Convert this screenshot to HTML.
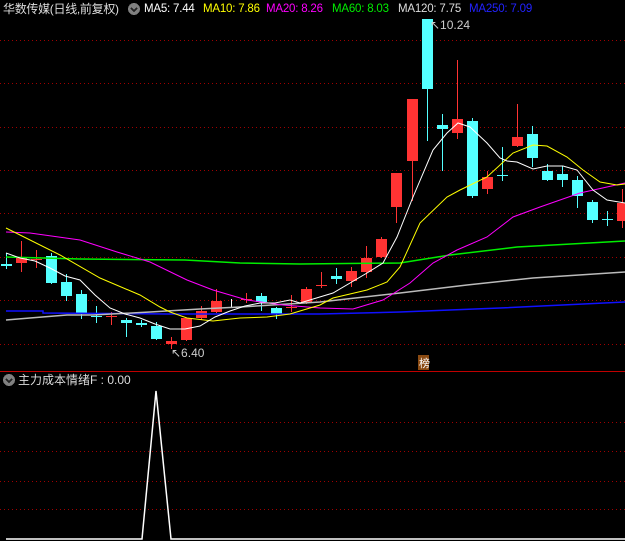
<!DOCTYPE html>
<html><head><meta charset="utf-8"><style>
body{margin:0;background:#000;width:625px;height:541px;overflow:hidden;position:relative;font-family:"Liberation Sans","Noto Sans CJK SC",sans-serif}
.t{position:absolute;top:0;font-size:11.5px;line-height:18px;white-space:nowrap;letter-spacing:-0.2px}
</style></head><body>
<svg width="625" height="541" style="position:absolute;left:0;top:0" shape-rendering="crispEdges">
<g stroke="#a00000" stroke-dasharray="1 3" stroke-width="1">
<line x1="0" y1="40.5" x2="625" y2="40.5"/><line x1="0" y1="83.5" x2="625" y2="83.5"/><line x1="0" y1="127.5" x2="625" y2="127.5"/><line x1="0" y1="170.5" x2="625" y2="170.5"/><line x1="0" y1="213.5" x2="625" y2="213.5"/><line x1="0" y1="257.5" x2="625" y2="257.5"/><line x1="0" y1="300.5" x2="625" y2="300.5"/><line x1="0" y1="344.5" x2="625" y2="344.5"/>
<line x1="0" y1="422.5" x2="625" y2="422.5"/><line x1="0" y1="451.5" x2="625" y2="451.5"/><line x1="0" y1="481.5" x2="625" y2="481.5"/><line x1="0" y1="509.5" x2="625" y2="509.5"/>
</g>
<line x1="0" y1="371.5" x2="625" y2="371.5" stroke="#c00000"/>
<g id="c"></g>
<g fill="none" stroke-width="1" shape-rendering="auto">
<polyline stroke="#1010ff" stroke-width="1.5" points="6,311 43,311 43,313 167,314 320,314 400,312 500,308 625,302"/>
<polyline stroke="#bbbbbb" stroke-width="1.5" points="6,320 30,318 67,315 93,315 150,312 200,309 240,307 320,302 400,293 467,285 533,278 625,272"/>
<polyline stroke="#00ee00" stroke-width="1.5" points="6,257 80,259 185,260 240,263 300,264 400,263 450,255 517,247 625,241"/>
<polyline stroke="#ff00ff" points="6,232 30,233 80,240 117,252 150,262 187,280 213,290 247,300 283,305 320,308 353,309 383,300 410,283 433,263 457,250 487,237 513,217 540,207 580,193 607,187 625,183"/>
<polyline stroke="#ffff00" points="6,228 60,255 100,278 140,295 160,307 170,312 187,318 213,321 240,318 267,317 290,314 320,305 333,298 367,290 387,282 400,267 420,223 447,197 460,190 487,177 513,153 533,145 547,146 567,157 583,170 600,182 617,185 625,184"/>
<polyline stroke="#ffffff" points="6,253 20,258 35,261 50,268 65,276 80,280 95,295 110,308 125,314 140,318 155,324 170,329 185,329 200,326 215,317 230,311 245,306 260,303 275,303 290,300 300,303 333,293 367,273 383,263 397,237 413,197 433,150 447,133 458,123 470,127 487,143 500,158 507,161 517,162 533,169 547,166 563,166 577,170 593,190 607,200 625,203"/>
<polyline stroke="#ffffff" stroke-width="1.5" points="6,539 142,539 156,391 171,539 625,539"/>
</g>
<circle cx="134" cy="9" r="6" fill="#808080"/><path d="M131 8 L134 11 L137 8" stroke="#222" fill="none" stroke-width="1.5"/>
<circle cx="9" cy="380" r="6" fill="#808080"/><path d="M6 379 L9 382 L12 379" stroke="#222" fill="none" stroke-width="1.5"/>
<rect x="418" y="355" width="11" height="15" fill="#8a4a12"/>
<text x="419" y="367" fill="#fff" font-size="11" font-family="Noto Sans CJK SC,sans-serif">榜</text>
<text x="430" y="29" fill="#ccc" font-size="12" font-family="Liberation Sans,sans-serif">↖10.24</text>
<text x="171" y="357" fill="#ccc" font-size="12" font-family="Liberation Sans,sans-serif">↖6.40</text>
</svg>
<div class="t" style="left:3px;color:#ddd;font-size:12px;letter-spacing:-0.3px">华数传媒(日线,前复权)</div>
<div class="t" style="left:144px;color:#fff">MA5: 7.44</div>
<div class="t" style="left:203px;color:#ff0">MA10: 7.86</div>
<div class="t" style="left:266px;color:#f0f">MA20: 8.26</div>
<div class="t" style="left:332px;color:#0e0">MA60: 8.03</div>
<div class="t" style="left:398px;color:#ddd">MA120: 7.75</div>
<div class="t" style="left:469px;color:#22f">MA250: 7.09</div>
<div class="t" style="left:18px;top:371px;color:#ddd;font-size:12px;letter-spacing:0">主力成本情绪F : 0.00</div>
<script>
var C=[[6,'c',264,266,253,269],[21,'r',258,263,241,272],[36,'r',259,260,250,268],[51,'c',256,283,253,284],[66,'c',282,296,274,301],[81,'c',294,314,290,319],[96,'c',316,317,306,323],[111,'r',316,317,312,325],[126,'c',320,323,318,337],[141,'c',323,325,320,327],[156,'c',326,339,322,340],[171,'r',341,344,337,349],[186,'r',318,340,318,341],[201,'r',311,318,306,320],[216,'r',301,312,289,313],[231,'w',307,308,299,308],[246,'r',299,300,293,303],[261,'c',296,302,293,311],[276,'c',308,314,307,319],[291,'r',307,308,295,312],[306,'r',289,303,287,304],[321,'r',285,286,272,288],[336,'c',276,279,268,284],[351,'r',271,281,267,287],[366,'r',258,272,246,278],[381,'r',239,257,237,258],[396,'r',173,207,173,223],[412,'r',99,161,99,201],[427,'c',19,89,19,141],[442,'c',125,129,114,171],[457,'r',119,133,60,139],[472,'c',121,196,118,198],[487,'r',177,189,171,194],[502,'c',175,176,147,181],[517,'r',137,146,104,147],[532,'c',134,158,126,167],[547,'c',171,180,164,181],[562,'c',174,180,166,187],[577,'c',180,196,176,208],[592,'c',202,220,200,223],[607,'c',219,220,211,226],[622,'r',203,221,189,228]];
var s='';C.forEach(function(a){var col=a[1]=='r'?'#ff3333':a[1]=='c'?'#54ffff':'#ffffff';var h=Math.max(a[3]-a[2],1);
s+='<line x1="'+(a[0]+.5)+'" y1="'+a[4]+'" x2="'+(a[0]+.5)+'" y2="'+a[5]+'" stroke="'+col+'"/>';
s+='<rect x="'+(a[0]-5)+'" y="'+a[2]+'" width="11" height="'+h+'" fill="'+col+'"/>';});
document.getElementById('c').innerHTML=s;
</script>
</body></html>
